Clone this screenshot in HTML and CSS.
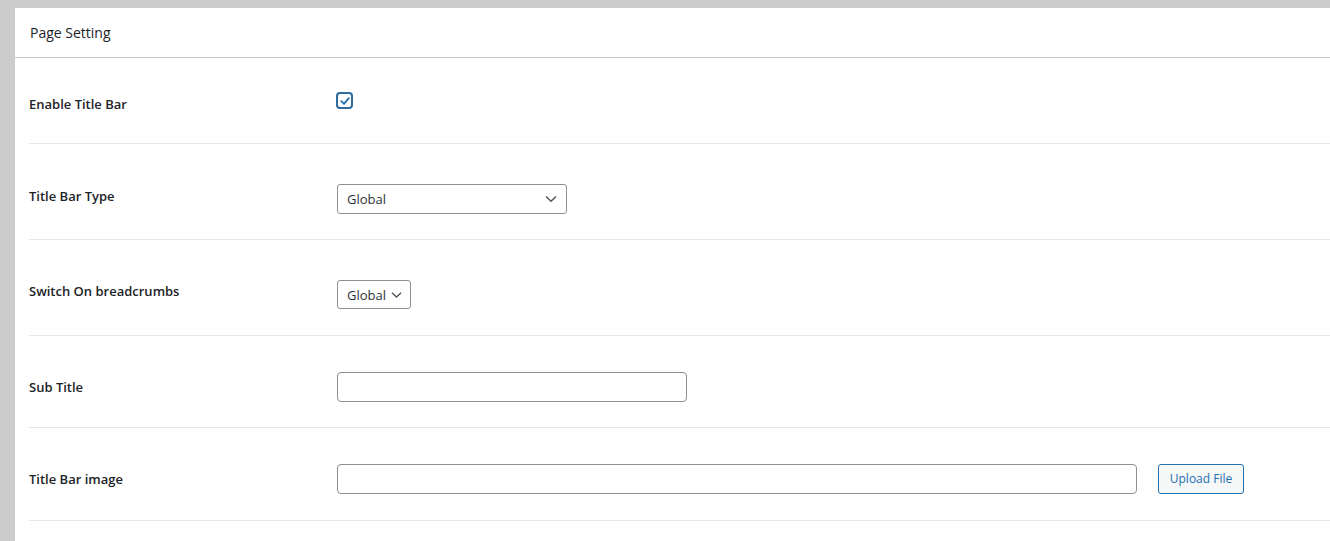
FILE: index.html
```html
<!DOCTYPE html>
<html lang="en">
<head>
<meta charset="utf-8">
<title>Page Setting</title>
<link rel="stylesheet" href="styles.css">
</head>
<body>
<div class="panel">
  <div class="panel-head">Page Setting</div>
  <div class="rows">
    <div class="row row-1">
      <div class="label">Enable Title Bar</div>
      <div class="field">
        <span class="checkbox">
          <svg viewBox="0 0 16 16" width="16" height="16"><path d="M4.3 8.2 L7 10.9 L11.8 5.2" fill="none" stroke="#2271b1" stroke-width="1.8" stroke-linecap="round" stroke-linejoin="round"/></svg>
        </span>
      </div>
    </div>
    <div class="row row-2">
      <div class="label">Title Bar Type</div>
      <div class="field">
        <div class="select select-wide"><span>Global</span><svg class="chev" viewBox="0 0 12 8" width="12" height="8"><path d="M1 1.5 L6 6.2 L11 1.5" fill="none" stroke="#50575e" stroke-width="1.5"/></svg></div>
      </div>
    </div>
    <div class="row row-3">
      <div class="label">Switch On breadcrumbs</div>
      <div class="field">
        <div class="select select-small"><span>Global</span><svg class="chev" viewBox="0 0 12 8" width="11" height="8"><path d="M1 1.5 L6 6.2 L11 1.5" fill="none" stroke="#50575e" stroke-width="1.5"/></svg></div>
      </div>
    </div>
    <div class="row row-4">
      <div class="label">Sub Title</div>
      <div class="field">
        <div class="input input-mid"></div>
      </div>
    </div>
    <div class="row row-5">
      <div class="label">Title Bar image</div>
      <div class="field">
        <div class="input input-long"></div>
        <div class="button">Upload File</div>
      </div>
    </div>
  </div>
</div>
</body>
</html>
```
FILE: styles.css
```css
* { box-sizing: border-box; }
html, body { margin: 0; padding: 0; }
body {
  background: #cccccc;
  font-family: "Open Sans", "Noto Sans", sans-serif;
  color: #1d2327;
  width: 1330px;
  height: 541px;
  overflow: hidden;
}
.panel {
  margin: 8px 0 0 15px;
  background: #fff;
  height: 533px;
}
.panel-head {
  height: 50px;
  border-bottom: 1px solid #c8c8c8;
  padding: 16px 0 0 15px;
  font-size: 14px;
  line-height: 18px;
  font-weight: 500;
  color: #1d2327;
}
.rows { margin-left: 14px; }
.row {
  display: flex;
  border-bottom: 1px solid #e6e6e6;
}
.label {
  width: 308px;
  flex: none;
  font-size: 13px;
  line-height: 18px;
  font-weight: 600;
  color: #1d2327;
}
.field { display: flex; align-items: flex-start; }
.row-1 { height: 86px; }
.row-1 .label { padding-top: 37px; }
.row-1 .field { padding-top: 34px; }
.row-2 { height: 96px; }
.row-2 .label { padding-top: 43px; }
.row-2 .field { padding-top: 40px; }
.row-3 { height: 96px; }
.row-3 .label { padding-top: 42px; }
.row-3 .field { padding-top: 40px; }
.row-4 { height: 92px; }
.row-4 .label { padding-top: 42px; }
.row-4 .field { padding-top: 36px; }
.row-5 { height: 93px; }
.row-5 .label { padding-top: 42px; }
.row-5 .field { padding-top: 36px; }

.checkbox {
  display: block;
  width: 17px;
  height: 17px;
  margin-left: -1px;
  border: 2px solid #2f6c9e;
  border-radius: 4px;
  position: relative;
}
.checkbox svg { position: absolute; left: -1px; top: -1px; }

.select {
  height: 30px;
  border: 1px solid #8c8f94;
  border-radius: 3px;
  display: flex;
  align-items: center;
  justify-content: space-between;
  font-size: 13px;
  color: #2c3338;
  padding: 0 8px 0 9px;
}
.select-wide { width: 230px; padding-right: 9px; }
.select-small { width: 74px; height: 29px; padding-right: 8px; }
.select-small span { margin-right: 4px; }
.input {
  height: 30px;
  border: 1px solid #8c8f94;
  border-radius: 4px;
  background: #fff;
}
.input-mid { width: 350px; }
.input-long { width: 800px; }
.button {
  margin-left: 21px;
  width: 86px;
  height: 30px;
  border: 1px solid #2271b1;
  border-radius: 3px;
  background: #f6f7f7;
  color: #2271b1;
  font-size: 12px;
  line-height: 28px;
  text-align: center;
}
```
